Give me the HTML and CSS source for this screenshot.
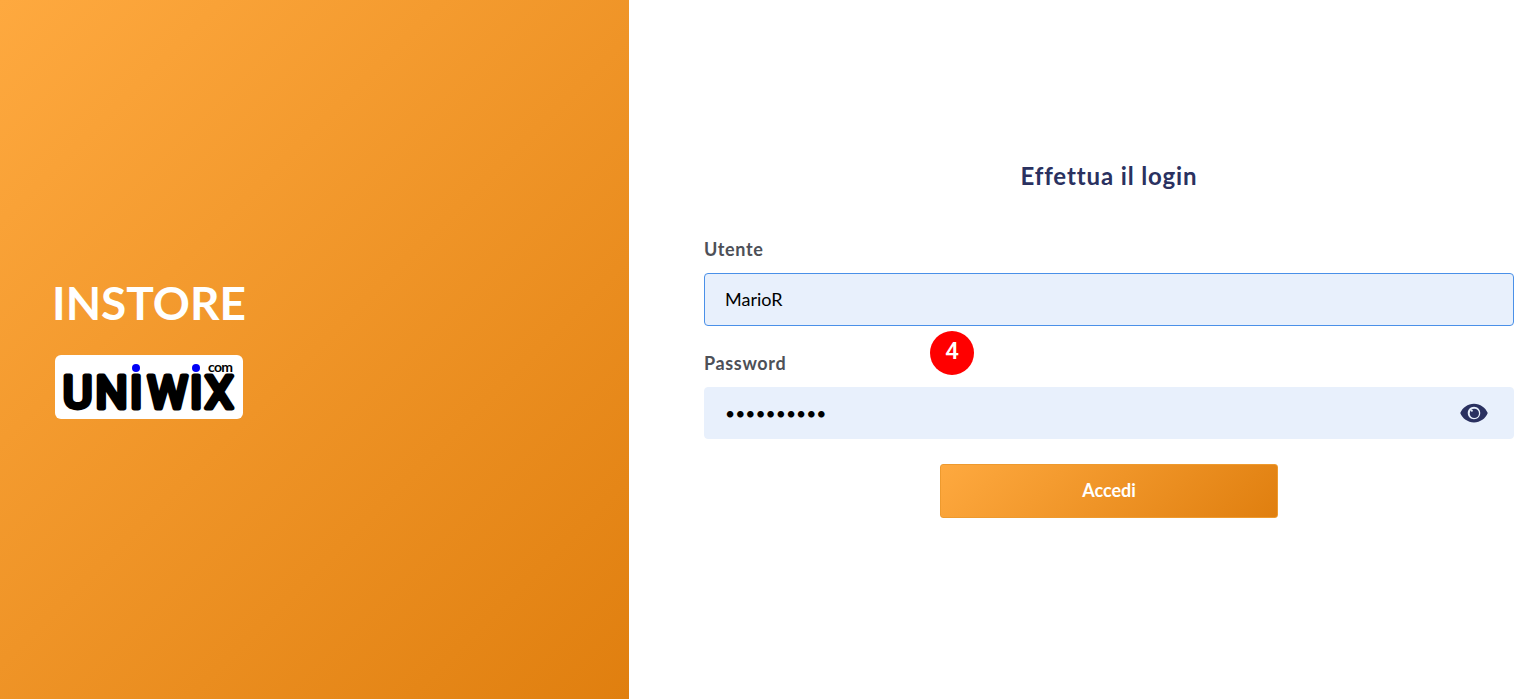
FILE: index.html
```html
<!DOCTYPE html>
<html lang="it">
<head>
  <meta charset="UTF-8">
  <meta name="viewport" content="width=device-width, initial-scale=1.0">
  <title>Instore - Login</title>
  <link rel="stylesheet" href="styles.css">
</head>
<body>
  <div class="login-page">
    <!-- pannello sinistro -->
    <aside class="brand-panel">
      <h1 class="brand-title">INSTORE</h1>
      <div class="brand-logo">
        <svg width="188" height="64" viewBox="0 0 188 64" aria-label="uniwix.com">
          <text class="logo-name" x="8 40.5 75 92.5 135 150" y="52.5">UNIWIX</text>
          <text class="logo-com" x="153" y="17" textLength="25">com</text>
          <circle class="logo-dot" cx="81" cy="13" r="4"></circle>
          <circle class="logo-dot" cx="141" cy="13" r="4"></circle>
        </svg>
      </div>
    </aside>

    <!-- formulario -->
    <main class="login-panel">
      <form class="login-form">
        <h2 class="login-title">Effettua il login</h2>

        <div class="form-field form-field-user">
          <label class="form-label" for="utente">Utente</label>
          <input class="form-input is-focus" id="utente" type="text" value="MarioR">
        </div>

        <div class="form-field">
          <label class="form-label" for="password">Password</label>
          <div class="password-box">
            <input class="form-input form-input-pass" id="password" type="password" value="mario12345">
            <svg class="eye-icon" width="30" height="30" viewBox="0 0 24 24" aria-hidden="true">
              <path d="M12 4.5C7 4.5 2.73 7.61 1 12c1.73 4.39 6 7.5 11 7.5s9.27-3.11 11-7.5c-1.73-4.39-6-7.5-11-7.5zM12 17c-2.76 0-5-2.24-5-5s2.24-5 5-5 5 2.24 5 5-2.24 5-5 5z"></path>
              <circle cx="12.3" cy="12.3" r="3.7"></circle>
              <circle class="eye-shine" cx="10.3" cy="10.2" r="0.8"></circle>
            </svg>
          </div>
        </div>

        <button class="login-btn" type="button">Accedi</button>
      </form>
    </main>
  </div>

  <!-- numero passo -->
  <span class="step-badge">4</span>
</body>
</html>
```

FILE: styles.css
```css
/* reset */
* {
  margin: 0;
  padding: 0;
  box-sizing: border-box;
}

:root {
  --orange-light: #fea93f;
  --orange-dark: #e07f0f;
  --navy: #2a3160;
  --label-color: #4d5057;
  --input-bg: #e8f0fc;
}

body {
  font-family: "Lato", sans-serif;
  background: #fff;
  overflow: hidden;
}

.login-page {
  display: flex;
  height: 699px;
}

/* pannello sinistro */
.brand-panel {
  width: 629px;
  flex: none;
  padding-left: 52px;
  padding-top: 275px;
  background: linear-gradient(135deg, var(--orange-light), var(--orange-dark));
}

.brand-title {
  font-size: 46px;
  line-height: 56px;
  font-weight: 700;
  color: #fff;
}

.brand-logo {
  width: 188px;
  height: 64px;
  margin: 24px 0 0 3px;
  background: #fff;
  border-radius: 6px;
}

.brand-logo svg {
  display: block;
}

.logo-name {
  font-family: "Roboto", sans-serif;
  font-size: 45px;
  font-weight: 400;
  fill: #000;
  stroke: #000;
  stroke-width: 5px;
  stroke-linejoin: round;
}

.logo-com {
  font-family: "Lato", sans-serif;
  font-size: 14px;
  font-weight: 700;
  fill: #000;
}

.logo-dot {
  fill: #0000f5;
}

/* formulario */
.login-panel {
  flex: 1;
  padding: 160px 17px 0 75px;
}

.login-title {
  font-size: 24px;
  line-height: 32px;
  font-weight: 700;
  letter-spacing: 0.87px;
  text-align: center;
  color: var(--navy);
  margin-bottom: 46px;
}

.form-field {
  margin-bottom: 25px;
}

.form-field-user {
  margin-bottom: 26px;
}

.form-label {
  display: block;
  font-size: 18px;
  line-height: 22px;
  font-weight: 700;
  letter-spacing: 0.65px;
  color: var(--label-color);
  margin-bottom: 13px;
}

.form-input {
  display: block;
  width: 100%;
  height: 52px;
  padding: 0 20px;
  font-family: "Lato", sans-serif;
  font-size: 18px;
  color: #000;
  background: var(--input-bg);
  border: 1px solid var(--input-bg);
  border-radius: 4px;
  outline: none;
}

.form-input.is-focus {
  height: 53px;
  padding-bottom: 2px;
  border-color: #4a90e8;
}

.form-input-pass {
  font-size: 17.5px;
}

.password-box {
  position: relative;
}

.eye-icon {
  position: absolute;
  right: 25px;
  top: 11px;
  fill: var(--navy);
}

.eye-icon .eye-shine {
  fill: #e8f0fc;
}

.login-btn {
  display: block;
  width: 338px;
  height: 54px;
  padding-bottom: 2px;
  margin: 0 auto;
  font-family: "Lato", sans-serif;
  font-size: 18px;
  font-weight: 700;
  color: #fff;
  background: linear-gradient(135deg, var(--orange-light), var(--orange-dark));
  border: 1px solid #ee9a2e;
  border-radius: 3px;
  cursor: pointer;
}

/* numero passo */
.step-badge {
  position: absolute;
  left: 930px;
  top: 331px;
  width: 44px;
  height: 44px;
  padding-bottom: 4px;
  display: flex;
  align-items: center;
  justify-content: center;
  font-family: "Roboto", sans-serif;
  font-size: 24px;
  font-weight: 500;
  color: #fff;
  background: #ff0000;
  border-radius: 50%;
}
```
